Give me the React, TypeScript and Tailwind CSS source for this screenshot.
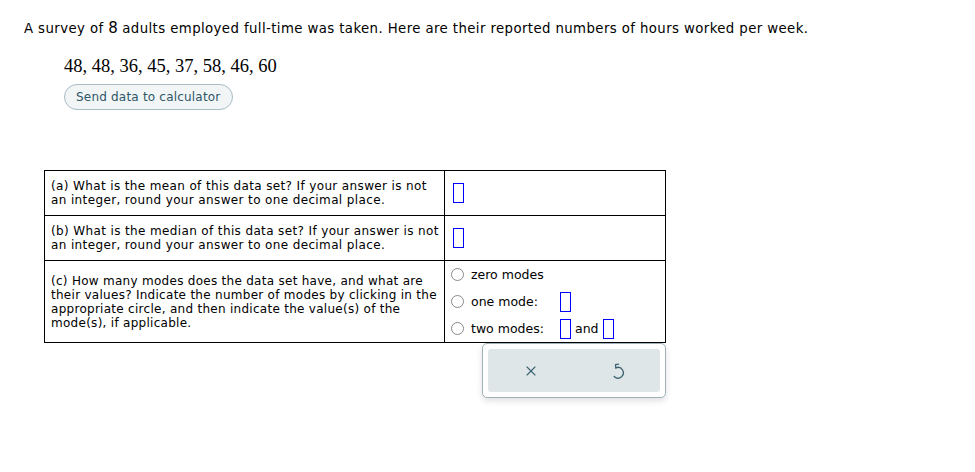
import { X } from 'lucide-react';

const verdana = { fontFamily: '"DejaVu Sans", Verdana, sans-serif' };

function AnswerBox() {
  return <span className="inline-block w-[11px] h-[20px] border border-[#0000ff] bg-white align-middle" />;
}

function Radio({ label, children }: { label: string; children?: React.ReactNode }) {
  return (
    <div className="flex items-center h-[27px]">
      <span className="w-[13px] h-[13px] rounded-full border border-[#8a8a8a] bg-white shrink-0" />
      <span className="ml-[7px] w-[89px]">{label}</span>
      {children}
    </div>
  );
}

function UndoIcon() {
  return (
    <svg width="20" height="20" viewBox="0 0 24 24" fill="none" stroke="currentColor" strokeWidth={1.6} strokeLinecap="round" strokeLinejoin="round">
      <path d="M7.4 18.6 A6.4 6.4 0 1 0 9.4 8.2" />
      <path d="M12.6 3.8 L9 4.4 L9.4 8.4" />
    </svg>
  );
}

export default function App() {
  return (
    <div className="w-[975px] h-[472px] bg-white text-black" style={verdana}>
      <p className="pt-[18px] pl-[24px] text-[13.3px] leading-[20px] tracking-[0.4px]">
        A survey of <span className="text-[15px] tracking-normal">8</span> adults employed full-time was taken. Here are their reported numbers of hours worked per week.
      </p>

      <div className="pl-[64px] mt-[16px]">
        <div className="text-[18.5px] leading-[22px]" style={{ fontFamily: '"Liberation Serif", "Times New Roman", serif' }}>
          48, 48, 36, 45, 37, 58, 46, 60
        </div>
        <button className="mt-[7px] h-[26px] px-[11px] rounded-full border border-[#a9bcc4] bg-[#f1f5f6] text-[12px] tracking-[0.2px] text-[#2e5666]">
          Send data to calculator
        </button>
      </div>

      <div className="ml-[44px] mt-[60px] w-[622px]">
        <table className="w-full border-collapse text-[12px] leading-[14px]">
          <tbody>
            <tr className="h-[45px]">
              <td className="w-[400px] border border-black pl-[6px] pr-[2px] align-middle tracking-[0.37px]">
                (a) What is the mean of this data set? If your answer is not an integer, round your answer to one decimal place.
              </td>
              <td className="border border-black pl-[8px] align-middle">
                <AnswerBox />
              </td>
            </tr>
            <tr className="h-[45px]">
              <td className="border border-black pl-[6px] pr-[2px] align-middle tracking-[0.37px]">
                (b) What is the median of this data set? If your answer is not an integer, round your answer to one decimal place.
              </td>
              <td className="border border-black pl-[8px] align-middle">
                <AnswerBox />
              </td>
            </tr>
            <tr className="h-[82px]">
              <td className="border border-black pl-[6px] pr-0 align-middle tracking-[0.28px]">
                (c) How many modes does the data set have, and what are their values? Indicate the number of modes by clicking in the appropriate circle, and then indicate the value(s) of the mode(s), if applicable.
              </td>
              <td className="border border-black pl-[6px] align-middle text-[12.5px]">
                <Radio label="zero modes" />
                <Radio label="one mode:">
                  <AnswerBox />
                </Radio>
                <Radio label="two modes:">
                  <AnswerBox />
                  <span className="mx-[4px]">and</span>
                  <AnswerBox />
                </Radio>
              </td>
            </tr>
          </tbody>
        </table>

        <div className="ml-[438px] w-[184px] h-[55px] rounded-[5px] border border-[#9fb2b9] bg-white p-[5px] shadow-[0_3px_6px_rgba(0,0,0,0.12)]">
          <div className="h-full rounded-[3px] bg-[#dfe6e8] flex items-center pl-[35px] gap-[69px] text-[#3e6472]">
            <X size={16} strokeWidth={1.7} />
            <UndoIcon />
          </div>
        </div>
      </div>
    </div>
  );
}
